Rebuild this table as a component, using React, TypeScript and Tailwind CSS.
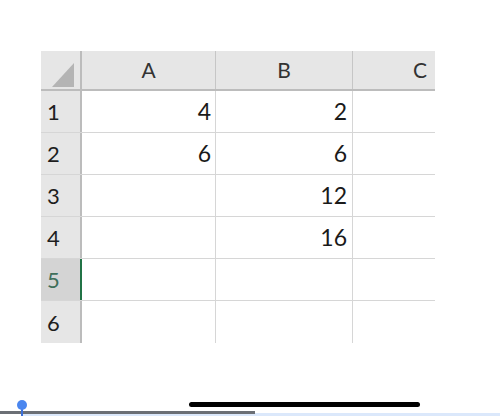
import React from 'react';

const rows: [string, string, string][] = [
  ['1', '4', '2'],
  ['2', '6', '6'],
  ['3', '', '12'],
  ['4', '', '16'],
  ['5', '', ''],
  ['6', '', ''],
];

const App: React.FC = () => {
  return (
    <div
      className="w-[500px] h-[416px] bg-white relative overflow-hidden"
      style={{ fontFamily: 'Lato, "Open Sans", sans-serif' }}
    >
      {/* sheet */}
      <div className="pt-[51px] pl-[41px]">
        <div className="w-[394px] overflow-hidden">
          {/* column headers */}
          <div className="flex h-[40px] bg-[#e6e6e6] border-b-2 border-[#bcbcbc] w-[600px]">
            <div className="w-[41px] border-r-2 border-[#bcbcbc] flex items-end justify-end pb-[2px] pr-[6px]">
              <svg width="22" height="24" viewBox="0 0 22 24">
                <polygon points="22,0 22,24 0,24" fill="#b4b4b4" />
              </svg>
            </div>
            <div className="w-[134px] border-r border-[#c6c6c6] flex items-center justify-center text-[21px] text-[#333]">A</div>
            <div className="w-[137px] border-r border-[#c6c6c6] flex items-center justify-center text-[21px] text-[#333]">B</div>
            <div className="w-[134px] flex items-center justify-center text-[21px] text-[#333]">C</div>
          </div>
          {rows.map(([n, a, b], i) => (
            <div
              key={n}
              className={`flex h-[42px] w-[600px] ${i < rows.length - 1 ? 'border-b border-[#d6d6d6]' : ''}`}
            >
              <div
                className={`w-[41px] border-r-2 flex items-center pl-[6px] text-[22px] ${
                  n === '5'
                    ? 'bg-[#d4d4d4] border-[#217346] text-[#3f6f5a]'
                    : 'bg-[#e6e6e6] border-[#bcbcbc] text-[#1e1e1e]'
                }`}
              >
                {n}
              </div>
              <div className="w-[134px] border-r border-[#d6d6d6] flex items-center justify-end pr-[4px] text-[23px] text-[#1a1a1a]">
                {a}
              </div>
              <div className="w-[137px] border-r border-[#d6d6d6] flex items-center justify-end pr-[5px] text-[23px] text-[#1a1a1a]">
                {b}
              </div>
              <div className="w-[134px]" />
            </div>
          ))}
        </div>
      </div>

      {/* media scrubber overlay */}
      <div className="absolute left-0 right-0 bottom-0 h-[18px]">
        <div className="absolute left-[22px] right-0 bottom-0 h-[3px] bg-[#dbe8fb]" />
        <div className="absolute left-0 w-[255px] bottom-[2px] h-[3px] bg-[#6b6f75]" />
        <div className="absolute left-[21px] bottom-0 w-[2px] h-[10px] bg-[#3b6fd8]" />
        <div className="absolute left-[17px] top-[2px] w-[10px] h-[10px] rounded-full bg-[#4a86ef]" />
        <div className="absolute left-[189px] w-[231px] top-[4px] h-[5px] rounded-full bg-black" />
      </div>
    </div>
  );
};

export default App;
